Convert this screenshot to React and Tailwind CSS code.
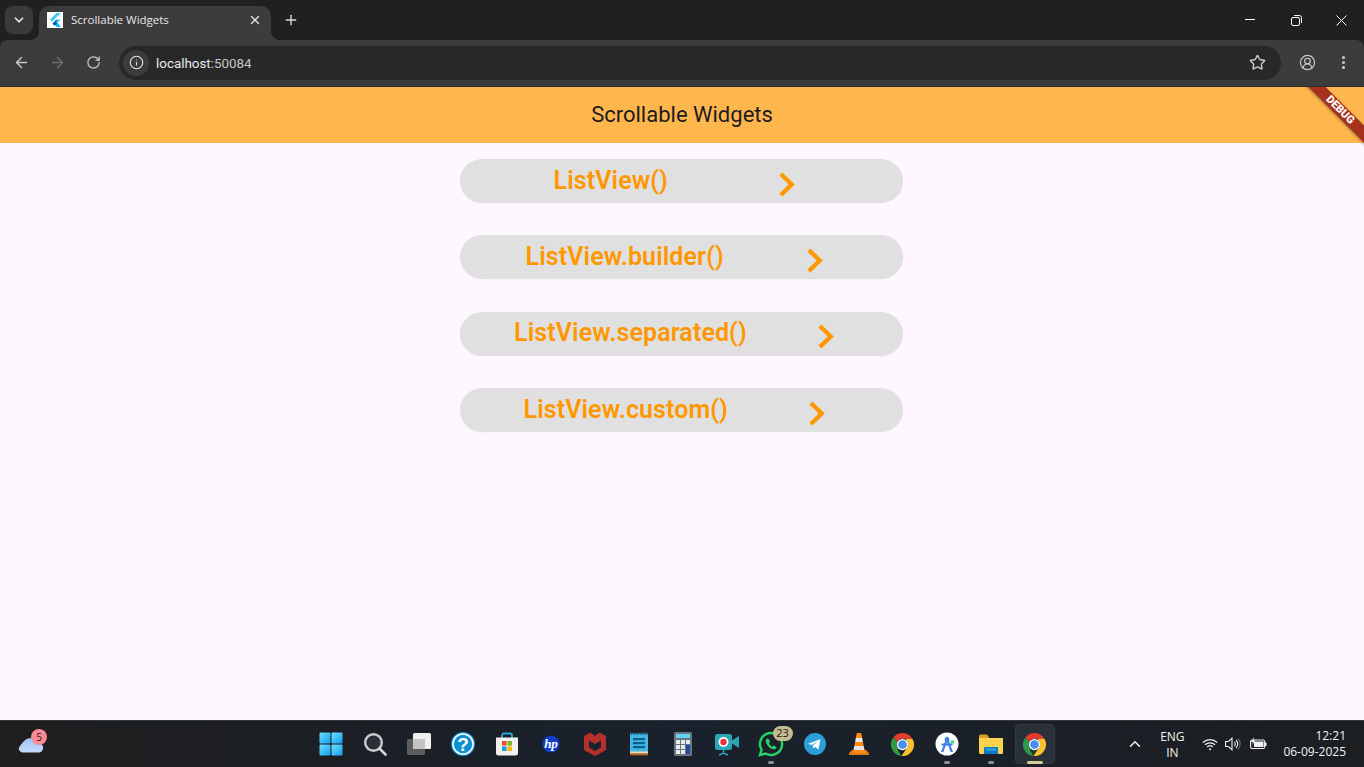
import React from "react";
import { ArrowLeft, ArrowRight, RotateCw, Info, Star, CircleUserRound, EllipsisVertical, ChevronDown, ChevronUp, X, Plus } from "lucide-react";

const Flutter = () => (
  <svg width="12" height="14" viewBox="0 0 12 14">
    <path d="M7.5 0H11.8L3 8.8.9 6.7z" fill="#47c5fb" />
    <path d="M7.5 6.5h4.3L7.7 10.6 5.6 8.5z" fill="#47c5fb" />
    <path d="M5.6 8.5 7.7 6.4l0 4.2z" fill="#00569e" />
    <path d="M5.6 10.7 7.7 8.6l4.1 5.4H7.5z" fill="#00b5f8" />
    <path d="M5.6 8.5 7.7 10.6 5.6 12.7 3.5 10.6z" fill="#00569e" />
  </svg>
);

const Chrome = ({ s = 25 }) => (
  <svg width={s} height={s} viewBox="0 0 24 24">
    <path d="M12 1a11 11 0 0 1 9.53 5.5H12a5.5 5.5 0 0 0-5 3.2L3.3 5.2A11 11 0 0 1 12 1z" fill="#e33b2e" />
    <path d="M3.3 5.2 7 9.7a5.5 5.5 0 0 0 .2 5L8.2 17l-.9.1L11 23A11 11 0 0 1 3.3 5.2z" fill="#2d9a47" />
    <path d="M21.53 6.5A11 11 0 0 1 11 23l4.8-7.2a5.5 5.5 0 0 0 .6-6.6L15 6.5z" fill="#fbc02d" />
    <circle cx="12" cy="12" r="5.4" fill="#fff" />
    <circle cx="12" cy="12" r="4.2" fill="#4a8df0" />
  </svg>
);

const Win = () => (
  <svg width="24" height="24" viewBox="0 0 24 24">
    <defs>
      <linearGradient id="wg" x1="0" y1="0" x2="1" y2="1">
        <stop offset="0" stopColor="#6fe0fb" />
        <stop offset="1" stopColor="#119ff0" />
      </linearGradient>
    </defs>
    <rect x="0.5" y="0.5" width="11" height="11" rx="1" fill="url(#wg)" />
    <rect x="12.5" y="0.5" width="11" height="11" rx="1" fill="url(#wg)" />
    <rect x="0.5" y="12.5" width="11" height="11" rx="1" fill="url(#wg)" />
    <rect x="12.5" y="12.5" width="11" height="11" rx="1" fill="url(#wg)" />
  </svg>
);

const Search = () => (
  <svg width="24" height="24" viewBox="0 0 24 24" fill="none">
    <circle cx="10.5" cy="10.5" r="8.3" stroke="#c9cdd0" strokeWidth="2.4" fill="#2a3038" />
    <path d="M16.5 16.5 22.5 22.5" stroke="#d6d6d6" strokeWidth="2.6" strokeLinecap="round" />
  </svg>
);

const TaskView = () => (
  <svg width="24" height="24" viewBox="0 0 24 24">
    <rect x="6" y="1" width="18" height="16" rx="1.5" fill="#f1f1f1" />
    <rect x="0" y="7" width="18" height="16" rx="1.5" fill="#5d5d5d" />
    <rect x="6" y="7" width="12" height="10" fill="#c4c4c4" />
  </svg>
);

const Help = () => (
  <svg width="24" height="24" viewBox="0 0 24 24">
    <circle cx="12" cy="12" r="12" fill="#1196d6" />
    <circle cx="12" cy="12" r="10" fill="#0f8fd0" stroke="#fff" strokeWidth="1.6" />
    <text x="12" y="18.800" textAnchor="middle" fontSize="19" fontWeight="700" fill="#fff" fontFamily="'Liberation Sans', sans-serif">?</text>
  </svg>
);

const Store = () => (
  <svg width="24" height="24" viewBox="0 0 24 24">
    <path d="M7 6V3.5A2 2 0 0 1 9 1.5h6a2 2 0 0 1 2 2V6" fill="none" stroke="#29a9e0" strokeWidth="1.8" />
    <path d="M1 5.5h22V21a2.5 2.5 0 0 1-2.5 2.5h-17A2.5 2.5 0 0 1 1 21z" fill="#f3f1ee" />
    <rect x="7" y="9" width="4.6" height="4.6" fill="#e9502a" />
    <rect x="12.4" y="9" width="4.6" height="4.6" fill="#7cb82a" />
    <rect x="7" y="14.4" width="4.6" height="4.6" fill="#14a2e2" />
    <rect x="12.4" y="14.4" width="4.6" height="4.6" fill="#fab70a" />
  </svg>
);

const Hp = () => (
  <svg width="18" height="18" viewBox="0 0 18 18">
    <circle cx="9" cy="9" r="8.6" fill="#0f3cc9" />
    <text x="9" y="13" textAnchor="middle" fontSize="13" fontStyle="italic" fontWeight="700" fill="#fff" fontFamily="'Liberation Serif', serif">hp</text>
  </svg>
);

const McAfee = () => (
  <svg width="22" height="24" viewBox="0 0 22 24">
    <path d="M0 4 6.500 0.500 11 4 15.500 0.500 22 4V18L11 24 0 18z" fill="#b5302c" />
    <path d="M5 8.500 11 12 17 8.500V15.500L11 19 5 15.500z" fill="#1b222b" />
  </svg>
);

const Notepad = () => (
  <svg width="20" height="24" viewBox="0 0 20 24">
    <rect x="1" y="1.5" width="18" height="21" fill="#42b6e4" />
    <rect x="1" y="19.5" width="18" height="2" fill="#f0d7b0" />
    <rect x="1" y="21.5" width="18" height="2" fill="#b45c1d" />
    <rect x="4" y="6" width="12" height="2.2" fill="#0d5f87" />
    <rect x="4" y="10" width="12" height="2.2" fill="#0d5f87" />
    <rect x="4" y="14" width="12" height="2.2" fill="#0d5f87" />
    {[2, 5, 8, 11, 14, 17].map((x) => <rect key={x} x={x} y="0.5" width="1.4" height="2.5" fill="#1d5f80" />)}
  </svg>
);

const Calc = () => (
  <svg width="18" height="24" viewBox="0 0 18 24">
    <rect x="0" y="0" width="18" height="24" rx="1.5" fill="#68747f" />
    <rect x="2" y="2" width="14" height="4" fill="#63d4f2" />
    {[0, 1, 2].map((r) => [0, 1, 2].map((c) =>
      c === 2 && r > 0 ? null : <rect key={`${r}${c}`} x={2 + c * 5} y={8 + r * 5} width="4" height="4" fill="#e8ecef" />
    ))}
    <rect x="12" y="13" width="4" height="9" fill="#1f4e98" />
  </svg>
);

const Rec = () => (
  <svg width="24" height="24" viewBox="0 0 24 24">
    <rect x="0" y="2" width="17" height="16" rx="2.5" fill="#2aa6b5" />
    <path d="M17 8.5 24 4v12l-7-4.5z" fill="#2aa6b5" />
    <circle cx="8.5" cy="10" r="5" fill="#fff" />
    <circle cx="8.5" cy="10" r="3.2" fill="#e9343a" />
    <path d="M8.5 18v3M4 23l4.5-2 4.5 2" stroke="#2aa6b5" strokeWidth="1.4" fill="none" />
  </svg>
);

const Whats = () => (
  <svg width="26" height="26" viewBox="0 0 26 26">
    <path d="M13 2a11 11 0 0 0-9.4 16.7L2 24l5.5-1.5A11 11 0 1 0 13 2z" fill="#1c222b" stroke="#25d366" strokeWidth="2.4" />
    <path d="M9 7.5c-1.4 1-1.7 2.8-.6 5 1.300 2.600 3.300 4.600 6 5.600 2 .6 3.500 0 4.300-1.600l-3-2-1.300 1.200c-1.500-.6-2.800-2-3.500-3.500l1.200-1.300-1.600-3.200z" fill="#25d366" />
  </svg>
);

const Telegram = () => (
  <svg width="24" height="24" viewBox="0 0 24 24">
    <circle cx="12" cy="12" r="11" fill="#2a9fdb" />
    <path d="M5 11.800 17.500 7l-2 10.500-3.500-2.600-1.800 1.700-.4-3 5.200-4.600-6.500 4z" fill="#fff" />
  </svg>
);

const Vlc = () => (
  <svg width="22" height="24" viewBox="0 0 22 24">
    <path d="M1 21 4 18h14l3 3v2H1z" fill="#e07b13" />
    <path d="M8.800 1h4.400l1 5H7.800z" fill="#ff8c12" />
    <path d="M7.800 6h6.400l.7 4H7.100z" fill="#e8e8e8" />
    <path d="M7.100 10h7.800l.8 4H6.300z" fill="#ff8c12" />
    <path d="M6.300 14h9.400l.8 4H5.500z" fill="#e8e8e8" />
    <path d="M5.500 18h11l1 3h-13z" fill="#ff8c12" />
  </svg>
);

const Studio = () => (
  <svg width="24" height="24" viewBox="0 0 24 24">
    <circle cx="12" cy="12" r="11.500" fill="#fff" />
    <path d="M12 4 6 20h2.400l3.600-10 3.600 10H18z" fill="#3f7de8" />
    <circle cx="12" cy="7.500" r="2.400" fill="#3f7de8" />
    <rect x="6.500" y="11.500" width="11" height="2" fill="#3f7de8" />
    <path d="M15.500 8.500h3.500v3h-3.500z" fill="#3ddc84" />
  </svg>
);

const Folder = () => (
  <svg width="24" height="20" viewBox="0 0 24 20">
    <path d="M0 2a1.500 1.500 0 0 1 1.500-1.500H8L10 3v3H0z" fill="#d99f1e" />
    <path d="M0 4h24v14.500a1.500 1.500 0 0 1-1.500 1.500h-21A1.500 1.500 0 0 1 0 18.500z" fill="#fcd34d" />
    <path d="M5 14a1 1 0 0 1 1-1h12a1 1 0 0 1 1 1v6H5z" fill="#0f7ac7" />
    <rect x="7" y="14.500" width="10" height="2" fill="#35a6e8" />
  </svg>
);

const Dot = () => <span className="absolute bottom-[3px] left-1/2 -ml-[3px] h-[3px] w-[6px] rounded-full bg-[#8c9096]" />;

const TaskIcon = ({ children, dot, active }) => (
  <div className="relative flex h-[46px] w-[44px] items-center justify-center">
    {active && (
      <span className="absolute left-[2px] top-[3px] h-[40px] w-[40px] rounded-[4px] border border-[#343a42] bg-[#2a3038]" />
    )}
    <span className="relative flex">{children}</span>
    {dot && <Dot />}
    {active && <span className="absolute bottom-[3px] left-1/2 -ml-[8px] h-[3px] w-[16px] rounded-full bg-[#d8cc96]" />}
  </div>
);

const Row = ({ label }) => (
  <div className="flex h-[44px] w-[443px] items-center justify-evenly rounded-[22px] bg-[#e0e0e0] shadow-[0_0.5px_1px_rgba(0,0,0,0.05)]">
    <span className="-mt-[1px] text-[25px] leading-[30px] font-semibold tracking-[0.1px] text-[#ff9800]">{label}</span>
    <span className="flex h-[48px] w-[48px] items-center justify-center pl-[4px] pt-[6px]">
      <svg width="17" height="25" viewBox="0 0 17 25">
        <path d="M3.400 0.500 15.800 12.600 3.400 24.500 0.400 21.400 9.700 12.600 0.400 3.600z" fill="#ff9800" />
      </svg>
    </span>
  </div>
);

export default function App() {
  return (
    <div className="flex h-[767px] w-[1364px] flex-col overflow-hidden bg-[#1f2020] font-['Roboto',sans-serif]">
      {/* tab strip */}
      <div className="flex h-[40px] shrink-0 items-start bg-[#1f2020] font-['Open_Sans',sans-serif]">
        <div className="ml-[5px] mt-[6px] flex h-[28px] w-[28px] items-center justify-center rounded-[8px] bg-[#3a3a3a]">
          <ChevronDown size={14} strokeWidth={3} color="#e4e4e4" />
        </div>
        <div className="relative ml-[6px] mt-[6px] flex h-[34px] w-[232px] items-center rounded-t-[10px] bg-[#3c3c3c] pb-[6px] pl-[8px] pr-[9px]">
          <span className="flex h-[16px] w-[16px] items-center justify-center bg-white"><Flutter /></span>
          <span className="ml-[8px] flex-1 text-[11.500px] leading-[16px] text-[#e6e6e6]">Scrollable Widgets</span>
          <X size={14} strokeWidth={2.4} color="#e0e0e0" />
          <span className="absolute bottom-0 left-full h-[8px] w-[8px] bg-[radial-gradient(circle_at_100%_0,transparent_7.500px,#3c3c3c_8px)]" />
          <span className="absolute bottom-0 right-full h-[8px] w-[8px] bg-[radial-gradient(circle_at_0_0,transparent_7.500px,#3c3c3c_8px)]" />
        </div>
        <div className="ml-[12px] mt-[12px] flex h-[16px] w-[16px] items-center justify-center">
          <Plus size={16} strokeWidth={2} color="#dcdcdc" />
        </div>
        <div className="ml-auto mr-[1px] flex h-[40px] items-center text-white">
          <div className="flex w-[46px] justify-center">
            <span className="mb-[2px] h-px w-[10px] bg-white" />
          </div>
          <div className="flex w-[46px] justify-center">
            <svg width="11" height="11" viewBox="0 0 11 11" fill="none" stroke="#fff">
              <rect x="0.500" y="2.500" width="8" height="8" rx="1.500" />
              <path d="M3 .5h5.500a2 2 0 0 1 2 2V8" />
            </svg>
          </div>
          <div className="flex w-[44px] justify-center">
            <svg width="11" height="11" viewBox="0 0 11 11" stroke="#fff" fill="none">
              <path d="M.5.5l10 10M10.500.5l-10 10" />
            </svg>
          </div>
        </div>
      </div>

      {/* toolbar */}
      <div className="flex h-[47px] shrink-0 items-center rounded-t-[8px] border-b border-[#2c2c2c] bg-[#3c3c3c] pb-[1px]">
        <div className="flex w-[114px] items-center pl-[3px]">
          <span className="flex w-[36px] justify-center"><ArrowLeft size={17} strokeWidth={2} color="#c9c9c9" /></span>
          <span className="flex w-[36px] justify-center"><ArrowRight size={17} strokeWidth={2} color="#6f6f6f" /></span>
          <span className="flex w-[36px] justify-center"><RotateCw size={15} strokeWidth={2} color="#c9c9c9" /></span>
        </div>
        <div className="ml-[5px] flex h-[34px] w-[1162px] items-center rounded-full bg-[#282828] pl-[4px] pr-[15px]">
          <span className="flex h-[26px] w-[26px] items-center justify-center rounded-full bg-[#3c3c3c]">
            <Info size={15} strokeWidth={1.8} color="#e6e6e6" />
          </span>
          <span className="ml-[7px] mt-[2px] flex-1 text-[13.400px] leading-[18px] text-[#e8eaed]">
            localhost<span className="text-[#c4c7c5]">:50084</span>
          </span>
          <Star size={17} strokeWidth={2} color="#c9c9c9" />
        </div>
        <span className="ml-[17px] flex w-[18px] justify-center"><CircleUserRound size={17} strokeWidth={1.7} color="#c9c9c9" /></span>
        <span className="ml-[18px] flex w-[18px] justify-center"><EllipsisVertical size={17} strokeWidth={2.4} color="#c9c9c9" /></span>
      </div>

      {/* flutter app */}
      <div className="relative flex min-h-0 flex-1 flex-col overflow-hidden bg-[#fef7ff]">
        <div className="flex h-[56px] shrink-0 items-center justify-center bg-[#ffb74d]">
          <span className="text-[22px] leading-[28px] text-[#1d1b20]">Scrollable Widgets</span>
        </div>
        <div className="flex flex-col items-center gap-[32.400px] pr-[1px] pt-[16px]">
          <Row label="ListView()" />
          <Row label="ListView.builder()" />
          <Row label="ListView.separated()" />
          <Row label="ListView.custom()" />
        </div>
        <div className="pointer-events-none absolute -right-[31px] top-[17px] flex h-[12px] w-[110px] rotate-45 items-center justify-center bg-[#a5321f] shadow-[0_1px_3px_rgba(0,0,0,0.4)]">
          <span className="text-[11px] leading-[12px] font-black text-white">DEBUG</span>
        </div>
      </div>

      {/* taskbar */}
      <div className="grid h-[47px] shrink-0 grid-cols-[1fr_auto_1fr] border-t border-[#34383c] bg-gradient-to-r from-[#1e1e1e] via-[#19212c] to-[#1c1f22] font-['Open_Sans',sans-serif]">
        <div className="flex items-center pl-[18px]">
          <div className="relative mt-[2px]">
            <svg width="26" height="16" viewBox="0 0 26 16">
              <defs>
                <linearGradient id="cl" x1="0" y1="0" x2="0" y2="1">
                  <stop offset="0" stopColor="#9cc4f5" />
                  <stop offset="1" stopColor="#c4dafa" />
                </linearGradient>
              </defs>
              <path d="M4.500 15.500a3.800 3.800 0 0 1-2.500-6.500C4 6.500 7 1.500 12 1c3 0 5 3 7 5a4.800 4.800 0 0 1 2.500 9.500z" fill="url(#cl)" />
            </svg>
            <span className="absolute -right-[3px] -top-[8px] flex h-[16px] w-[16px] items-center justify-center rounded-full bg-[#fb8a96] text-[10px] text-[#1a1a1a]">5</span>
          </div>
        </div>
        <div className="flex pl-[1px]">
          <TaskIcon><Win /></TaskIcon>
          <TaskIcon><Search /></TaskIcon>
          <TaskIcon><TaskView /></TaskIcon>
          <TaskIcon><Help /></TaskIcon>
          <TaskIcon><Store /></TaskIcon>
          <TaskIcon><Hp /></TaskIcon>
          <TaskIcon><McAfee /></TaskIcon>
          <TaskIcon><Notepad /></TaskIcon>
          <TaskIcon><Calc /></TaskIcon>
          <TaskIcon><Rec /></TaskIcon>
          <TaskIcon dot>
            <Whats />
            <span className="absolute -right-[9px] -top-[5px] flex h-[15px] w-[20px] items-center justify-center rounded-full bg-[#c4bb8e] text-[11px] text-[#1a1a1a]">23</span>
          </TaskIcon>
          <TaskIcon><Telegram /></TaskIcon>
          <TaskIcon><Vlc /></TaskIcon>
          <TaskIcon><Chrome /></TaskIcon>
          <TaskIcon dot><Studio /></TaskIcon>
          <TaskIcon dot><Folder /></TaskIcon>
          <TaskIcon active><Chrome /></TaskIcon>
        </div>
        <div className="flex items-center justify-end pr-[18px] text-[12px] text-[#f2f2f2]">
          <ChevronUp size={18} strokeWidth={2} color="#f0f0f0" />
          <div className="ml-[9px] flex w-[38px] flex-col items-center pt-[1px] text-[12px] leading-[16px]">
            <span>ENG</span>
            <span>IN</span>
          </div>
          <svg className="ml-[11px]" width="16" height="13" viewBox="0 0 16 13" fill="none" stroke="#f0f0f0" strokeWidth="1.200">
            <path d="M.8 4.500a10.500 10.500 0 0 1 14.400 0M3 6.800a7.400 7.400 0 0 1 10 0M5.200 9a4.200 4.200 0 0 1 5.600 0" />
            <circle cx="8" cy="11.300" r="1" fill="#f0f0f0" stroke="none" />
          </svg>
          <svg className="ml-[7px]" width="16" height="14" viewBox="0 0 16 14" fill="none" stroke="#f0f0f0" strokeWidth="1.100">
            <path d="M.6 4.500h2.800L7 1.200v11.600L3.400 9.500H.6z" />
            <path d="M9.300 4.800a3 3 0 0 1 0 4.400M11 3a5.500 5.500 0 0 1 0 8" />
            <path d="M13 1.500a8 8 0 0 1 0 11" stroke="#666" />
          </svg>
          <svg className="ml-[9px]" width="17" height="14" viewBox="0 0 17 14">
            <rect x="0.600" y="3" width="14" height="8.500" rx="1.500" fill="none" stroke="#f0f0f0" strokeWidth="1.100" />
            <rect x="4" y="4.500" width="9.500" height="5.500" fill="#f0f0f0" />
            <rect x="15" y="5.500" width="1.500" height="3.500" fill="#f0f0f0" />
            <path d="M4 0 1 5h2L2 8l3.500-4.500h-2z" fill="#f0f0f0" />
          </svg>
          <div className="ml-[16px] flex flex-col items-end leading-[16px]">
            <span>12:21</span>
            <span>06-09-2025</span>
          </div>
        </div>
      </div>
    </div>
  );
}
